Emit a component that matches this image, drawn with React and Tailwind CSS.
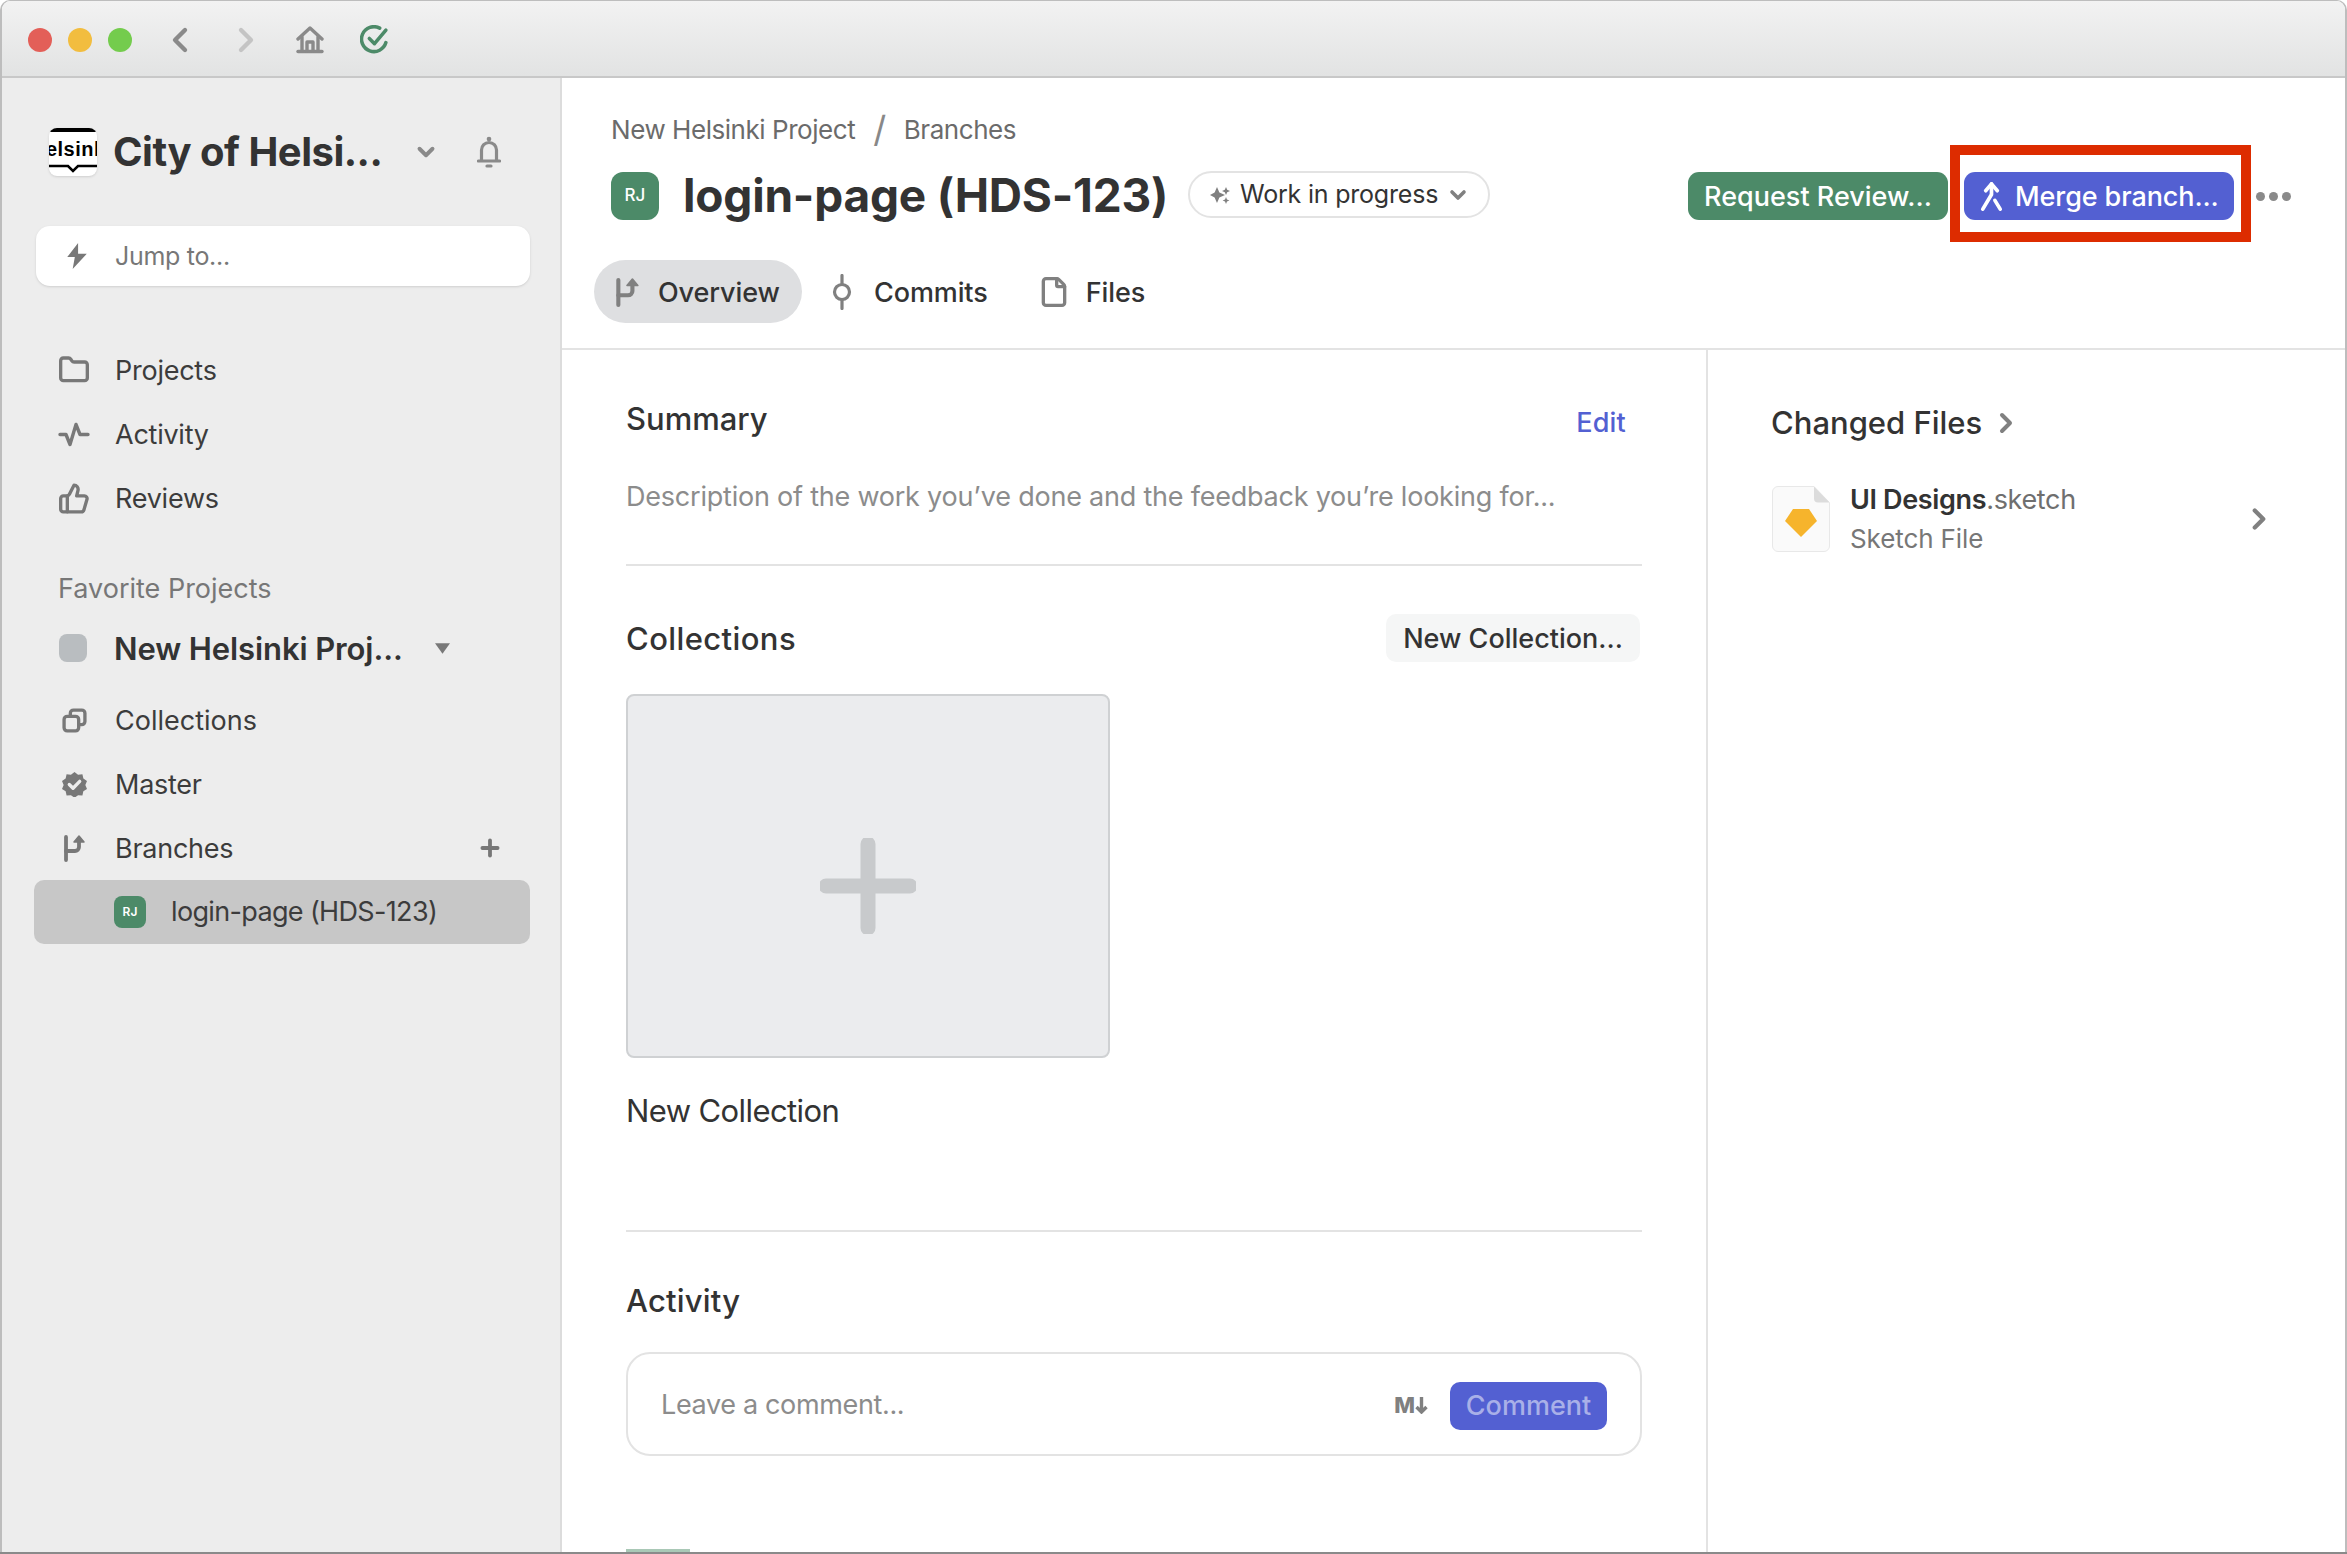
import { ChevronLeft, ChevronRight, ChevronDown, Folder, ThumbsUp, Plus, File } from "lucide-react"

function BranchIcon({ className }) {
  return (
    <svg viewBox="0 0 24 28" className={className} fill="none" stroke="currentColor" strokeWidth="3.8" strokeLinecap="round" strokeLinejoin="round">
      <path d="M4 3v23" />
      <path d="M4 17h9a4 4 0 0 0 4-4V5" />
      <path d="M17 2l5 6H12z" fill="currentColor" strokeWidth="1.5" />
    </svg>
  )
}

function ActivityIcon({ className }) {
  return (
    <svg viewBox="0 0 32 24" className={className} fill="none" stroke="currentColor" strokeWidth="3.4" strokeLinecap="round" strokeLinejoin="round">
      <path d="M2 12h6l4 10 6-20 4 10h8" />
    </svg>
  )
}

function CopyIcon({ className }) {
  return (
    <svg viewBox="0 0 24 24" className={className} fill="none" stroke="currentColor" strokeWidth="3.2" strokeLinejoin="round">
      <rect x="2" y="8" width="14" height="14" rx="3" />
      <path d="M8 8V5a3 3 0 0 1 3-3h8a3 3 0 0 1 3 3v8a3 3 0 0 1-3 3h-3" />
    </svg>
  )
}

function MasterIcon({ className }) {
  return (
    <svg viewBox="0 0 24 24" className={className}>
      <path fill="currentColor" d="M12 0l3.4 2.6 4.2-.4.9 4.1L24 8.6 22.4 12.4 24 16.2l-3.5 2.3-.9 4.1-4.2-.4L12 24.8l-3.4-2.6-4.2.4-.9-4.1L0 16.2l1.6-3.8L0 8.6l3.5-2.3.9-4.1 4.2.4z" />
      <path d="M7 12l3.6 3.6L17 9" fill="none" stroke="#ededed" strokeWidth="3.2" strokeLinecap="round" strokeLinejoin="round" />
    </svg>
  )
}

function MergeIcon({ className }) {
  return (
    <svg viewBox="0 0 24 32" className={className} fill="none" stroke="currentColor" strokeWidth="3.8" strokeLinecap="round" strokeLinejoin="round">
      <path d="M6 10l6-7 6 7" />
      <path d="M12 3v11l-9 15" />
      <path d="M15.5 20l5.5 9" />
    </svg>
  )
}

function BellIcon({ className }) {
  return (
    <svg viewBox="0 0 24 32" className={className} fill="none" stroke="currentColor" strokeWidth="3.2" strokeLinecap="round" strokeLinejoin="round">
      <circle cx="12" cy="3" r="1.6" fill="currentColor" strokeWidth="1.5" />
      <path d="M4.5 24V14a7.5 7.5 0 0 1 15 0v10" />
      <path d="M1.5 25h21" />
      <path d="M10 30h4" />
    </svg>
  )
}

function HomeIcon({ className }) {
  return (
    <svg viewBox="0 0 28 28" className={className} fill="none" stroke="currentColor" strokeWidth="3.4" strokeLinecap="round" strokeLinejoin="round">
      <path d="M2 13L14 2l12 11" />
      <path d="M6 11v13M22 11v13" />
      <path d="M2 25.5h24" />
      <path d="M11 25v-9h6v9" />
    </svg>
  )
}

function CommitIcon({ className }) {
  return (
    <svg viewBox="0 0 20 36" className={className} fill="none" stroke="currentColor" strokeWidth="3.2" strokeLinecap="round">
      <circle cx="10" cy="18" r="7.5" />
      <path d="M10 1.5v9M10 25.5v9" />
    </svg>
  )
}

function Logo() {
  return (
    <div className="w-[48px] h-[48px] rounded-[8px] bg-white overflow-hidden flex flex-col items-center shadow-sm shrink-0">
      <div className="w-full h-[4px] bg-black shrink-0" />
      <div className="w-full h-[31px] flex items-center justify-center overflow-hidden">
        <span className="mt-[3px] text-[20px] font-bold text-black font-['Liberation_Sans',sans-serif] whitespace-nowrap tracking-[0.5px]">elsinl</span>
      </div>
      <svg viewBox="0 0 48 10" className="w-[48px] h-[10px]">
        <path d="M0 3h19l5 5 5-5h19" fill="none" stroke="#000" strokeWidth="2.5" />
      </svg>
    </div>
  )
}

function NavRow({ icon, label, right, labelClass = "tracking-[-0.25px]" }) {
  return (
    <div className="h-[64px] flex items-center pl-[56px] pr-[60px]">
      <div className="w-[32px] flex justify-center text-[#787878] shrink-0">{icon}</div>
      <span className={`ml-[25px] mt-[2px] text-[27px] text-[#3c3c3c] ${labelClass}`}>{label}</span>
      {right}
    </div>
  )
}

function Sidebar() {
  return (
    <aside className="w-[560px] shrink-0 bg-[#ededed] border-r-2 border-[#dcdcdc] flex flex-col">
      <div className="mt-[50px] h-[48px] flex items-center pl-[47px]">
        <Logo />
        <span className="ml-[16px] text-[40px] font-bold text-[#333] tracking-[-0.5px] w-[300px] whitespace-nowrap">City of Helsi...</span>
        <ChevronDown className="w-[26px] h-[26px] text-[#8a8a8a]" strokeWidth={3.6} />
        <BellIcon className="ml-[38px] w-[24px] h-[32px] text-[#8a8a8a]" />
      </div>

      <div className="mt-[50px] ml-[34px] mr-[30px] h-[60px] bg-white rounded-[14px] flex items-center pl-[30px] shadow-sm">
        <svg viewBox="0 0 20 24" className="w-[22px] h-[26px] text-[#787878]">
          <path fill="currentColor" d="M11 0L1 13h7l-2 11 13-14h-8z" />
        </svg>
        <span className="ml-[27px] mt-[2px] text-[25px] tracking-[-0.3px] text-[#777]">Jump to...</span>
      </div>

      <div className="mt-[52px] flex flex-col">
        <NavRow icon={<Folder className="w-[38px] h-[38px]" strokeWidth={2.5} />} label="Projects" />
        <NavRow icon={<ActivityIcon className="w-[33px] h-[25px]" />} label="Activity" />
        <NavRow icon={<ThumbsUp className="w-[37px] h-[37px]" strokeWidth={2.5} />} label="Reviews" />
      </div>

      <div className="mt-[38px] h-[40px] pl-[56px] pt-[2px] flex items-center text-[27px] text-[#777]">Favorite Projects</div>

      <div className="mt-[8px] h-[64px] flex items-center pl-[57px]">
        <div className="w-[28px] h-[28px] rounded-[8px] bg-[#b9bdc0]" />
        <span className="ml-[27px] mt-[2px] text-[31px] font-semibold text-[#333] tracking-[-0.1px] w-[301px] whitespace-nowrap">New Helsinki Proj...</span>
        <svg viewBox="0 0 14 10" className="ml-[20px] w-[15px] h-[11px]"><path fill="#787878" d="M0 0h14L7 10z" /></svg>
      </div>

      <div className="mt-[8px] flex flex-col">
        <NavRow icon={<CopyIcon className="w-[25px] h-[25px]" />} label="Collections" labelClass="tracking-[0px]" />
        <NavRow icon={<MasterIcon className="w-[25px] h-[25px]" />} label="Master" />
        <NavRow
          icon={<BranchIcon className="w-[24px] h-[28px]" />}
          label="Branches"
          right={<Plus className="ml-auto mr-[-3px] w-[26px] h-[26px] text-[#777]" strokeWidth={3.5} />}
        />
      </div>

      <div className="ml-[32px] mr-[30px] h-[64px] bg-[#c7c7c7] rounded-[10px] flex items-center pl-[80px]">
        <div className="w-[32px] h-[32px] rounded-[8px] bg-[#4c8a68] flex items-center justify-center text-white text-[12px] font-semibold">RJ</div>
        <span className="ml-[25px] mt-[1px] text-[27px] text-[#3c3c3c] tracking-[-0.65px]">login-page (HDS-123)</span>
      </div>
    </aside>
  )
}

function Tab({ icon, label, active, className = "" }) {
  return (
    <div className={`h-[63px] flex items-center rounded-full ${active ? "bg-[#dedfe1]" : ""} ${className}`}>
      <span className="text-[#808080] flex items-center">{icon}</span>
      <span className="mt-[3px] text-[27px] font-medium text-[#333] tracking-[-0.1px]">{label}</span>
    </div>
  )
}

function Header() {
  return (
    <header className="h-[272px] shrink-0 border-b-2 border-[#e3e3e3] flex flex-col">
      <div className="mt-[31px] h-[40px] pl-[49px] flex items-center text-[26px] text-[#6b6b6b] tracking-[-0.45px]">
        <span>New Helsinki Project</span>
        <span className="ml-[18px] mr-[18px] text-[36px] text-[#888]">/</span>
        <span>Branches</span>
      </div>

      <div className="mt-[23px] h-[48px] flex items-center pl-[49px]">
        <div className="w-[48px] h-[48px] rounded-[12px] bg-[#4c8a68] flex items-center justify-center text-white text-[17px] font-medium shrink-0">RJ</div>
        <h1 className="ml-[24px] mt-[-2px] text-[46px] font-bold text-[#333] tracking-[-0.2px] whitespace-nowrap w-[505px]">login-page (HDS-123)</h1>
        <div className="mt-[-3px] h-[47px] w-[302px] rounded-full border-2 border-[#e3e3e3] flex items-center pl-[20px] shrink-0">
          <svg viewBox="0 0 20 20" className="w-[20px] h-[20px] text-[#808080]">
            <path fill="currentColor" d="M7 2l2.4 5.6L15 10l-5.6 2.4L7 18l-2.4-5.6L0 10l4.6-2.4zM16 2l1.2 2.8L20 6l-2.8 1.2L16 10l-1.2-2.8L12 6l2.8-1.2zM16 12l1 2.4 2.4 1-2.4 1-1 2.6-1-2.6-2.4-1 2.4-1z" />
          </svg>
          <span className="ml-[10px] text-[25px] text-[#333] tracking-[-0.2px] whitespace-nowrap">Work in progress</span>
          <ChevronDown className="ml-[8px] w-[24px] h-[24px] text-[#808080]" strokeWidth={3.6} />
        </div>
        <div className="ml-[198px] w-[260px] h-[48px] rounded-[11px] bg-[#4c8a68] flex items-center justify-center pt-[2px] text-white text-[27px] font-medium whitespace-nowrap">Request Review...</div>
        <div className="ml-[16px] relative w-[270px] h-[48px] rounded-[11px] bg-[#5360d2] flex items-center pl-[15px] text-white text-[27px] font-medium whitespace-nowrap tracking-[-0.1px]">
          <MergeIcon className="w-[25px] h-[31px]" />
          <span className="ml-[11px] mt-[2px]">Merge branch...</span>
          <div className="absolute left-[-14px] right-[-17px] top-[-27px] bottom-[-22px] border-[10px] border-[#dd2c00]" />
        </div>
        <div className="ml-[22px] flex gap-[4px]">
          <div className="w-[9px] h-[9px] rounded-full bg-[#8a8a8a]" />
          <div className="w-[9px] h-[9px] rounded-full bg-[#8a8a8a]" />
          <div className="w-[9px] h-[9px] rounded-full bg-[#8a8a8a]" />
        </div>
      </div>

      <div className="mt-[40px] flex items-center pl-[32px]">
        <Tab active className="w-[208px] pl-[20px]" icon={<BranchIcon className="w-[26px] h-[32px] mr-[18px]" />} label="Overview" />
        <Tab className="ml-[30px]" icon={<CommitIcon className="w-[20px] h-[36px] mr-[22px]" />} label="Commits" />
        <Tab className="ml-[50px]" icon={<File className="w-[32px] h-[34px] mr-[16px]" strokeWidth={2.5} />} label="Files" />
      </div>
    </header>
  )
}

function LeftColumn() {
  return (
    <section className="w-[1146px] shrink-0 border-r-2 border-[#e3e3e3] px-[64px] flex flex-col overflow-hidden">
      <div className="mt-[50px] h-[40px] flex items-center justify-between">
        <h2 className="text-[31px] font-medium text-[#333] mt-[-2px]">Summary</h2>
        <span className="mr-[16px] mt-[6px] text-[27px] font-medium text-[#5360d2] tracking-[0.2px]">Edit</span>
      </div>
      <p className="mt-[37px] h-[40px] flex items-center text-[27px] text-[#8c8c8c] tracking-[-0.22px] whitespace-nowrap">Description of the work you’ve done and the feedback you’re looking for...</p>
      <div className="mt-[47px] h-[2px] bg-[#e3e3e3] shrink-0" />

      <div className="mt-[48px] h-[48px] flex items-center justify-between shrink-0">
        <h2 className="text-[31px] font-medium text-[#333] tracking-[0.4px] mt-[2px]">Collections</h2>
        <div className="mr-[2px] w-[254px] h-[48px] rounded-[10px] bg-[#f5f6f6] flex items-center justify-center pt-[2px] text-[27px] font-medium text-[#333] whitespace-nowrap">New Collection...</div>
      </div>

      <div className="mt-[32px] w-[484px] h-[364px] shrink-0 rounded-[8px] bg-[#ebecee] border-2 border-[#cfd1d3] flex items-center justify-center">
        <svg viewBox="0 0 96 96" className="mt-[20px] w-[96px] h-[96px]">
          <path d="M48 6v84M6 48h84" stroke="#c8cacc" strokeWidth="15" strokeLinecap="round" />
        </svg>
      </div>
      <div className="mt-[33px] h-[40px] flex items-center text-[31px] text-[#333] tracking-[-0.6px] shrink-0">New Collection</div>

      <div className="mt-[99px] h-[2px] bg-[#e3e3e3] shrink-0" />

      <h2 className="mt-[49px] h-[40px] flex items-center text-[31px] font-medium text-[#333] shrink-0 tracking-[0.2px]">Activity</h2>

      <div className="mt-[31px] h-[104px] shrink-0 rounded-[24px] border-2 border-[#e3e3e3] flex items-center pl-[33px] pr-[33px]">
        <span className="mt-[2px] text-[27px] text-[#8c8c8c] tracking-[-0.35px]">Leave a comment...</span>
        <div className="ml-auto mt-[2px] flex items-center text-[#808080]">
          <span className="text-[22px] font-extrabold">M</span>
          <svg viewBox="0 0 12 18" className="w-[13px] h-[18px]">
            <path d="M6 1v15M1 11l5 5 5-5" fill="none" stroke="currentColor" strokeWidth="3.4" />
          </svg>
        </div>
        <div className="ml-[22px] mt-[3px] w-[157px] h-[48px] rounded-[10px] bg-[#5360d2] flex items-center justify-center pt-[2px] text-[27px] font-medium text-[#a9b0e8]">Comment</div>
      </div>

      <div className="mt-[93px] w-[64px] h-[6px] bg-[#a9c8b6] shrink-0" />
    </section>
  )
}

function RightColumn() {
  return (
    <section className="flex-1 pl-[63px] pr-[70px] flex flex-col">
      <div className="mt-[53px] h-[40px] flex items-center">
        <h2 className="text-[31px] font-medium text-[#333]">Changed Files</h2>
        <ChevronRight className="ml-[8px] w-[32px] h-[32px] text-[#808080]" strokeWidth={3} />
      </div>
      <div className="mt-[38px] flex items-center pl-[1px]">
        <svg viewBox="0 0 58 66" className="w-[58px] h-[66px] shrink-0">
          <path d="M6 .5h36l15.5 16V60a5.5 5.5 0 0 1-5.5 5.5H6A5.5 5.5 0 0 1 .5 60V6A5.5 5.5 0 0 1 6 .5z" fill="#fafafa" stroke="#e8e8e8" />
          <path d="M42 .5l15.5 16H46a4 4 0 0 1-4-4z" fill="#dcdcdc" />
          <path d="M21 23h16l8 12-16 16-16-16z" fill="#f6b42c" />
        </svg>
        <div className="ml-[20px] flex flex-col">
          <div className="h-[38px] flex items-center text-[27px] text-[#333] whitespace-nowrap tracking-[-0.35px]">
            <span className="font-semibold">UI Designs</span>
            <span className="text-[#6f6f6f]">.sketch</span>
          </div>
          <div className="h-[38px] flex items-center text-[26px] text-[#777] tracking-[-0.1px]">Sketch File</div>
        </div>
        <ChevronRight className="ml-auto mr-[-1px] w-[34px] h-[34px] text-[#808080]" strokeWidth={3} />
      </div>
    </section>
  )
}

export default function App() {
  return (
    <div className="w-[2347px] h-[1554px] overflow-hidden bg-white font-['Inter',sans-serif]">
      <div className="h-[1552px] rounded-t-[10px] border-x-2 border-t border-[#bdbdbd] overflow-hidden flex flex-col">
        <div className="h-[77px] shrink-0 bg-gradient-to-b from-[#f2f2f2] to-[#e2e3e3] border-b-2 border-[#c8c8c8] flex items-center pl-[26px] pt-[2px]">
          <div className="w-[24px] h-[24px] rounded-full bg-[#e35f58]" />
          <div className="ml-[16px] w-[24px] h-[24px] rounded-full bg-[#f2bd3f]" />
          <div className="ml-[16px] w-[24px] h-[24px] rounded-full bg-[#74cc4d]" />
          <ChevronLeft className="ml-[28px] w-[40px] h-[40px] text-[#8a8a8a]" strokeWidth={2.6} />
          <ChevronRight className="ml-[26px] w-[40px] h-[40px] text-[#c4c4c4]" strokeWidth={2.6} />
          <HomeIcon className="ml-[30px] w-[28px] h-[28px] text-[#8a8a8a]" />
          <svg viewBox="0 0 28 28" className="ml-[36px] w-[29px] h-[29px]" fill="none" stroke="#4c8a68" strokeWidth="3.4" strokeLinecap="round" strokeLinejoin="round">
            <path d="M25 17a12 12 0 1 1-6-14" />
            <path d="M9 13l5 5 11-13" />
          </svg>
        </div>
        <div className="flex-1 flex min-h-0">
          <Sidebar />
          <main className="flex-1 flex flex-col min-w-0 bg-white">
            <Header />
            <div className="flex-1 flex min-h-0">
              <LeftColumn />
              <RightColumn />
            </div>
          </main>
        </div>
      </div>
      <div className="h-[2px] bg-[#8a8a8a]" />
    </div>
  )
}
